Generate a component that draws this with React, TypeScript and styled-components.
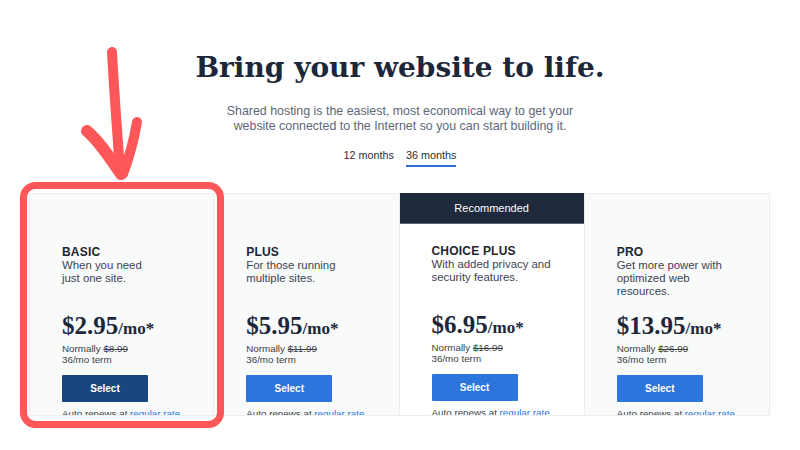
import React from "react";
import styled, { createGlobalStyle } from "styled-components";

const Global = createGlobalStyle`
  html, body { margin: 0; padding: 0; background: #ffffff; }
  body { font-family: "Liberation Sans", Arial, sans-serif; }
  * { box-sizing: border-box; }
`;

const Page = styled.div`
  position: relative;
  width: 800px;
  height: 450px;
  overflow: hidden;
  display: flex;
  flex-direction: column;
  align-items: center;
`;

const Title = styled.h1`
  margin: 48px 0 0;
  font-family: "DejaVu Serif", "Liberation Serif", serif;
  font-weight: 700;
  font-size: 28px;
  line-height: 40px;
  color: #1c283a;
`;

const Subtitle = styled.p`
  margin: 16px 0 0;
  width: 380px;
  text-align: center;
  font-size: 12.4px;
  line-height: 15px;
  color: #5d6878;
`;

const Tabs = styled.div`
  margin-top: 14px;
  display: flex;
  gap: 12px;
`;

const Tab = styled.span<{ $active?: boolean }>`
  font-size: 10.8px;
  line-height: 14px;
  color: #2b2f36;
  padding-bottom: 3px;
  border-bottom: 2px solid ${(p) => (p.$active ? "#2c6fd6" : "transparent")};
`;

const Cards = styled.div`
  margin-top: 26px;
  align-self: flex-start;
  margin-left: 29px;
  width: 741px;
  height: 223px;
  display: grid;
  grid-template-columns: repeat(4, 1fr);
  overflow: hidden;
`;

const Card = styled.div<{ $featured?: boolean }>`
  display: flex;
  flex-direction: column;
  background: ${(p) => (p.$featured ? "#ffffff" : "#f9fafa")};
  border: 1px solid #eceeee;
  border-left: 0;
  border-top: ${(p) => (p.$featured ? "0" : "1px solid #eceeee")};
  &:first-child {
    border-left: 1px solid #eceeee;
  }
  overflow: hidden;
`;

const Banner = styled.div`
  height: 31px;
  flex: none;
  background: #1e2a3c;
  color: #ffffff;
  font-size: 11px;
  display: flex;
  align-items: center;
  justify-content: center;
  border-bottom: 1px solid #5a6577;
`;

const Body = styled.div<{ $featured?: boolean }>`
  padding: ${(p) => (p.$featured ? "20px" : "51px")} 0 0 32px;
`;

const PlanName = styled.div`
  font-size: 12px;
  line-height: 14px;
  font-weight: 700;
  color: #1f2533;
  letter-spacing: 0.2px;
`;

const Desc = styled.div`
  height: 39px;
  font-size: 11.4px;
  line-height: 13px;
  color: #3d4450;
`;

const Price = styled.div`
  margin-top: 14px;
  font-family: "Liberation Serif", "Times New Roman", serif;
  font-weight: 700;
  font-size: 25px;
  line-height: 28px;
  color: #1c283a;
`;

const Per = styled.span`
  font-size: 17px;
`;

const Small = styled.div`
  font-size: 9.8px;
  line-height: 11px;
  color: #3a3f47;
`;

const Strike = styled.span`
  text-decoration: line-through;
`;

const SelectButton = styled.button<{ $dark?: boolean }>`
  margin-top: 10px;
  width: 86px;
  height: 27px;
  border: 0;
  border-radius: 1px;
  background: ${(p) => (p.$dark ? "#18467f" : "#2c75dc")};
  color: #ffffff;
  font-family: "Liberation Sans", Arial, sans-serif;
  font-weight: 700;
  font-size: 10px;
  padding: 0;
`;

const Renew = styled.div`
  margin-top: 6px;
  font-size: 9.8px;
  line-height: 11px;
  color: #3a3f47;
`;

const Link = styled.span`
  color: #2c75dc;
`;

const Overlay = styled.svg`
  position: absolute;
  left: 0;
  top: 0;
  pointer-events: none;
`;

type Plan = {
  name: string;
  desc: string[];
  price: string;
  normal: string;
  featured?: boolean;
  dark?: boolean;
};

const plans: Plan[] = [
  { name: "BASIC", desc: ["When you need", "just one site."], price: "$2.95", normal: "$8.99", dark: true },
  { name: "PLUS", desc: ["For those running", "multiple sites."], price: "$5.95", normal: "$11.99" },
  { name: "CHOICE PLUS", desc: ["With added privacy and", "security features."], price: "$6.95", normal: "$16.99", featured: true },
  { name: "PRO", desc: ["Get more power with", "optimized web", "resources."], price: "$13.95", normal: "$26.99" },
];

export default function App() {
  return (
    <>
      <Global />
      <Page>
        <Title>Bring your website to life.</Title>
        <Subtitle>
          Shared hosting is the easiest, most economical way to get your website connected to the Internet so you can start building it.
        </Subtitle>
        <Tabs>
          <Tab>12 months</Tab>
          <Tab $active>36 months</Tab>
        </Tabs>
        <Cards>
          {plans.map((p) => (
            <Card key={p.name} $featured={p.featured}>
              {p.featured && <Banner>Recommended</Banner>}
              <Body $featured={p.featured}>
                <PlanName>{p.name}</PlanName>
                <Desc>
                  {p.desc.map((line, i) => (
                    <div key={i}>{line}</div>
                  ))}
                </Desc>
                <Price>
                  {p.price}
                  <Per>/mo*</Per>
                </Price>
                <Small>
                  Normally <Strike>{p.normal}</Strike>
                </Small>
                <Small>36/mo term</Small>
                <SelectButton $dark={p.dark}>Select</SelectButton>
                <Renew>
                  Auto renews at <Link>regular rate</Link>
                </Renew>
              </Body>
            </Card>
          ))}
        </Cards>
        <Overlay width="800" height="450" viewBox="0 0 800 450">
          <rect x="23.5" y="185.5" width="197" height="239" rx="12" fill="none" stroke="#ff5759" strokeWidth="7" />
          <g fill="none" stroke="#ff5759" strokeLinecap="round" strokeLinejoin="round">
            <path d="M112 52 C114 90 117 130 120 170" strokeWidth="10" />
            <path d="M87 131 C99 141 110 158 121 174" strokeWidth="12" />
            <path d="M137 122 C134 140 129 158 123 174" strokeWidth="10" />
          </g>
        </Overlay>
      </Page>
    </>
  );
}
